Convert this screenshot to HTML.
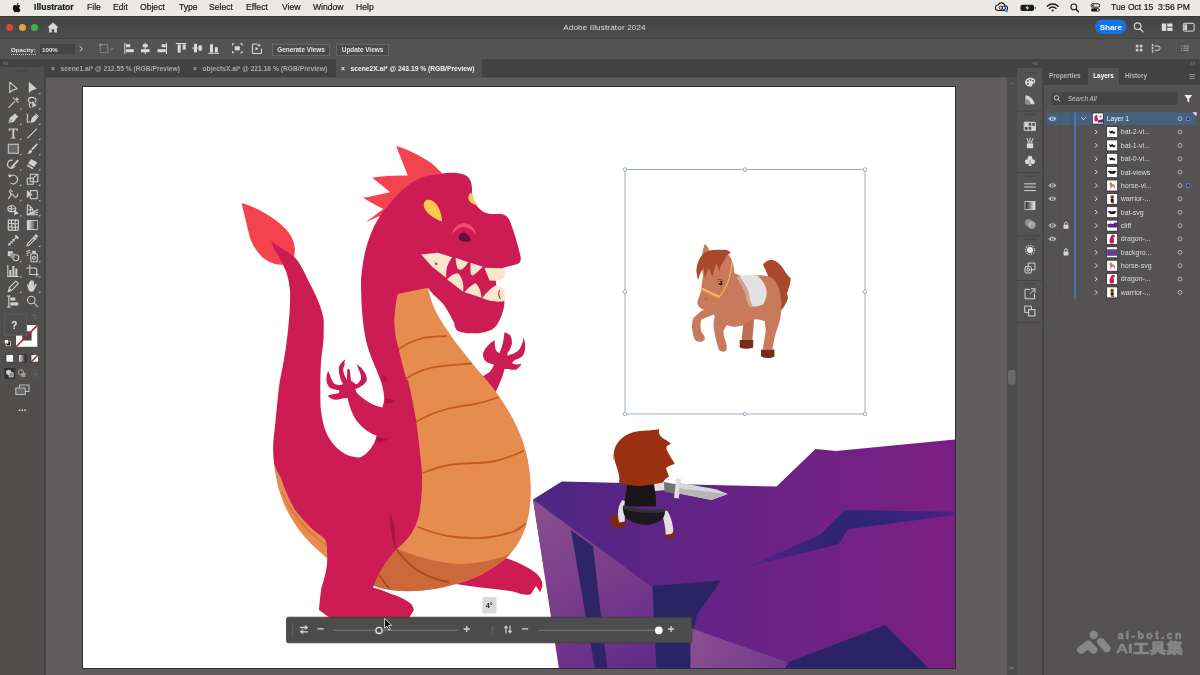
<!DOCTYPE html>
<html lang="en">
<head>
<meta charset="utf-8">
<title>Adobe Illustrator 2024</title>
<style>
*{box-sizing:border-box;margin:0;padding:0}
html,body{width:1200px;height:675px;overflow:hidden;background:#505050}
body{position:relative;font-family:"Liberation Sans","Noto Sans CJK SC",sans-serif;color:#ddd;-webkit-font-smoothing:antialiased}
.abs{position:absolute}
#menubar{will-change:transform;left:0;top:0;width:1200px;height:15.500px;background:#ebe9e6;color:#1a1a1a;font-size:8.6px;line-height:15px;white-space:nowrap}
#menubar span{position:absolute;top:0;-webkit-text-stroke:.2px #1a1a1a}
#titlebar{left:0;top:15.500px;width:1200px;height:22.500px;background:linear-gradient(#434343,#4e4e4e);border-top:1px solid #3a3a3a}
#title{will-change:transform;left:0;width:1209px;top:6.500px;text-align:center;font-size:8.1px;color:#dedede;letter-spacing:.15px}
.dot{position:absolute;top:7.500px;width:7px;height:7px;border-radius:50%}
#ctrl{left:0;top:38px;width:1200px;height:21px;background:#535353;border-top:1px solid #424242}
#ctrl .t{position:absolute;will-change:transform;font-size:6.2px;color:#e4e4e4;top:6.5px;font-weight:bold}
.btn{will-change:transform;position:absolute;top:5px;height:12px;border:1px solid #676767;font-size:6.4px;line-height:10.5px;text-align:center;color:#e6e6e6;font-weight:bold;background:#4a4a4a}
#tabs{left:0;top:59px;width:1200px;height:18px;background:#424242}
#tabs .tab{position:absolute;top:1px;height:17px;font-size:6.7px;line-height:17px;will-change:transform;color:#a9a9a9;white-space:nowrap;font-weight:bold}
#tabs .tab.on{background:#525252;color:#f2f2f2;top:0;line-height:19px;height:18px}
#tools{left:0;top:67px;width:44px;height:608px;background:#504f4d}
#toolsep{left:44px;top:77px;width:2px;height:598px;background:#474646}
#canvas{left:46px;top:77.500px;width:960.500px;height:598px;background:#5f5d5e;overflow:hidden}
#artboard{left:83px;top:87px;width:872px;height:581px;background:#fff;outline:1px solid #2e2e2e}
#vscroll{left:1006.500px;top:77px;width:10.500px;height:598px;background:#4d4c4c}
#dock{left:1017px;top:68px;width:24.500px;height:607px;background:#545253}
#dockgap{left:1041.500px;top:59px;width:2px;height:616px;background:#454444}
#panel{left:1043.500px;top:68px;width:156.500px;height:607px;background:#545253}
#ptabs{left:1043.500px;top:68px;width:156.500px;height:16.500px;background:#434242}
#ptabs span{will-change:transform;position:absolute;top:0;height:16.500px;line-height:16px;font-size:6.4px;font-weight:bold;color:#b4b4b4}
.row{position:absolute;left:1047px;width:150px;height:13px}
.lname{position:absolute;font-size:6.5px;color:#d9d9d9;line-height:13px;white-space:nowrap}
.thumb{position:absolute;width:11px;height:11px;background:#fff;border:0.5px solid #222}
</style>
</head>
<body>
<!-- ===== macOS menu bar ===== -->
<div id="menubar" class="abs">
  <svg class="abs" style="left:12px;top:2px" width="10" height="11" viewBox="0 0 20 22"><path d="M14.5 11.6c0-2.4 2-3.500 2.100-3.600-1.100-1.700-2.900-1.900-3.500-1.900-1.500-.2-2.900.9-3.700.9-.8 0-1.900-.9-3.200-.8-1.600 0-3.100.9-3.900 2.400-1.700 2.900-.4 7.200 1.200 9.600.8 1.200 1.700 2.500 3 2.400 1.200 0 1.700-.8 3.100-.8s1.800.8 3.100.8 2.100-1.200 2.900-2.300c.9-1.300 1.300-2.600 1.300-2.700-.100 0-2.400-.9-2.400-4zM12.200 4.500c.6-.8 1.100-1.900 1-3-.9 0-2.100.6-2.800 1.400-.6.700-1.100 1.800-1 2.900 1.100.1 2.200-.5 2.800-1.300z" fill="#111"/></svg>
  <span style="left:34px;font-weight:bold">Illustrator</span>
  <span style="left:87px">File</span>
  <span style="left:113px">Edit</span>
  <span style="left:140px">Object</span>
  <span style="left:179px">Type</span>
  <span style="left:209px">Select</span>
  <span style="left:246px">Effect</span>
  <span style="left:282px">View</span>
  <span style="left:313px">Window</span>
  <span style="left:356px">Help</span>
  <span style="left:1111px">Tue Oct 15&nbsp; 3:56 PM</span>
</div>
<!-- ===== title bar ===== -->
<div id="titlebar" class="abs">
  <div class="dot" style="left:6px;background:#e0443e"></div>
  <div class="dot" style="left:18.5px;background:#e5a33a"></div>
  <div class="dot" style="left:31px;background:#3db24b"></div>
  <svg class="abs" style="left:47px;top:5px" width="12" height="11" viewBox="0 0 12 11"><path d="M6 0.500 0.400 5.600h1.700v4.900h2.700V7.200h2.400v3.300h2.700V5.600h1.700z" fill="#d8d8d8"/></svg>
  <div id="title" class="abs">Adobe Illustrator 2024</div>
</div>
<!-- ===== control bar ===== -->
<div id="ctrl" class="abs">
  <span class="t" style="left:11px;border-bottom:1px dotted #ccc;line-height:7.5px">Opacity:</span>
  <div class="abs" style="left:40px;top:4.500px;width:35px;height:10.500px;background:#454545"></div>
  <span class="t" style="left:42px">100%</span>
  <svg class="abs" style="left:78px;top:6px" width="6" height="8" viewBox="0 0 6 8"><path d="M1.800,1.200 L4.300,3.800 L1.800,6.400" fill="none" stroke="#e2e2e2" stroke-width="1"/></svg>
  <div class="btn" style="left:272px;width:58px">Generate Views</div>
  <div class="btn" style="left:336px;width:53px">Update Views</div>
</div>
<!-- ===== doc tabs ===== -->
<div id="tabs" class="abs">
  <div class="tab" style="left:51px">×&nbsp;&nbsp;&nbsp;scene1.ai* @ 212.55 % (RGB/Preview)</div>
  <div class="tab" style="left:193px">×&nbsp;&nbsp;&nbsp;objectsX.ai* @ 221.16 % (RGB/Preview)</div>
  <div class="tab on" style="left:336px;width:146px;padding-left:5px">×&nbsp;&nbsp;&nbsp;scene2X.ai* @ 243.19 % (RGB/Preview)</div>
</div>
<!--TOP-START-->
<svg class="abs" style="left:0;top:0" width="1200" height="60" viewBox="0 0 1200 60" font-family="Liberation Sans, sans-serif">
  <!-- menubar status icons -->
  <g fill="none" stroke="#1c1c1c" stroke-width="1.100">
    <path d="M997.500,10.500 a2.800 2.800 0 0 1 .6,-5.500 a3.600 3.600 0 0 1 6.800,.6 a2.500 2.500 0 0 1 .8,4.900 Z"/>
    <circle cx="1000.800" cy="7.800" r="1.700" stroke-width=".9"/><circle cx="1003.800" cy="7.800" r="1.700" stroke-width=".9"/>
  </g>
  <circle cx="1006.500" cy="10.500" r="1.600" fill="#3b8ed6"/>
  <rect x="1020.500" y="4.800" width="13.500" height="6.200" rx="1.800" fill="#1c1c1c"/><rect x="1034.600" y="6.700" width="1.200" height="2.400" rx=".5" fill="#555"/>
  <path d="M1028,5.300 L1025,8.300 H1027.300 L1026.300,10.600 L1029.500,7.500 H1027.200 Z" fill="#f2f2f2"/>
  <g fill="none" stroke="#1c1c1c" stroke-width="1.350" stroke-linecap="round">
    <path d="M1047.300,6.300 a7.600 7.600 0 0 1 10.800,0"/><path d="M1049.300,8.400 a4.800 4.800 0 0 1 6.800,0"/>
  </g>
  <circle cx="1052.700" cy="10.500" r="1.100" fill="#1c1c1c"/>
  <circle cx="1073.800" cy="6.900" r="2.900" fill="none" stroke="#1c1c1c" stroke-width="1.100"/><path d="M1076,9.200 L1078.500,11.700" stroke="#1c1c1c" stroke-width="1.300" stroke-linecap="round"/>
  <rect x="1091" y="3.800" width="8.800" height="3.400" rx="1.700" fill="none" stroke="#1c1c1c" stroke-width="1"/><circle cx="1093" cy="5.500" r=".9" fill="#1c1c1c"/>
  <rect x="1091" y="8.200" width="8.800" height="3.400" rx="1.700" fill="#1c1c1c"/><circle cx="1097.800" cy="9.900" r=".9" fill="#ebe9e6"/>
  <!-- share + window icons -->
  <rect x="1095" y="19.400" width="31.500" height="14.600" rx="7.300" fill="#1574e4"/>
  <text x="1110.800" y="29.600" font-size="8" font-weight="bold" fill="#fff" text-anchor="middle">Share</text>
  <circle cx="1137.600" cy="26.200" r="3.300" fill="none" stroke="#dcdcdc" stroke-width="1.100"/><path d="M1140,28.800 L1143,31.800" stroke="#dcdcdc" stroke-width="1.200" stroke-linecap="round"/>
  <g fill="#dcdcdc"><rect x="1161.800" y="23.500" width="4.400" height="7.400"/><rect x="1167.200" y="23.500" width="5.300" height="3.200"/><rect x="1167.200" y="27.700" width="5.300" height="3.200"/></g>
  <rect x="1183.300" y="23.300" width="10.800" height="7.800" rx="1" fill="none" stroke="#dcdcdc" stroke-width="1"/><rect x="1184.300" y="24.300" width="2.600" height="5.800" fill="#dcdcdc"/>
  <!-- control bar right icons -->
  <g fill="#cfcfcf"><rect x="1135.800" y="44.800" width="2.600" height="2.600"/><rect x="1139.800" y="44.800" width="2.600" height="2.600"/><rect x="1135.800" y="48.800" width="2.600" height="2.600"/><rect x="1139.800" y="48.800" width="2.600" height="2.600"/></g>
  <g fill="none" stroke="#cfcfcf" stroke-width="1"><path d="M1152.500,44 V52.500" stroke-width="1.400" stroke-dasharray="2.200 .9"/><path d="M1154.500,46 H1158 a2 2 0 0 1 0,4.200 H1154.500"/></g>
  <path d="M1181,46 h1 M1183.300,46 H1189 M1181,48.200 h1 M1183.300,48.200 H1189 M1181,50.400 h1 M1183.300,50.400 H1189" stroke="#a8a8a8" stroke-width=".9"/>
  <!-- control bar left icons -->
  <rect x="100.200" y="44.700" width="7.600" height="8" fill="none" stroke="#a9a9a9" stroke-width=".9" stroke-dasharray="1.200 .7"/><path d="M98.800,44.700 h3 M100.200,43.300 v3" stroke="#a9a9a9" stroke-width=".7"/>
  <path d="M110,48.300 l1.600,1.600 l1.600,-1.600" fill="none" stroke="#a9a9a9" stroke-width=".8"/>
  <g fill="#dadada" stroke="none">
    <rect x="124.300" y="42.700" width="1" height="11.300"/><rect x="126" y="44.200" width="4.200" height="3"/><rect x="126" y="49.200" width="7.800" height="3"/>
    <rect x="144.700" y="42.700" width="1" height="11.300"/><rect x="142.800" y="44.200" width="4.900" height="3"/><rect x="141" y="49.200" width="8.500" height="3"/>
    <rect x="166" y="42.700" width="1" height="11.300"/><rect x="161.700" y="44.200" width="4" height="3"/><rect x="157.500" y="49.200" width="8.200" height="3"/>
    <rect x="175.800" y="43" width="10.500" height="1"/><rect x="177.700" y="44.400" width="3" height="8.200"/><rect x="182.700" y="44.400" width="3" height="5.200"/>
    <rect x="192" y="47.600" width="10.500" height="1"/><rect x="194" y="43.800" width="3" height="8.500"/><rect x="198.700" y="45.300" width="3" height="5.500"/>
    <rect x="208.200" y="52.800" width="10.800" height="1"/><rect x="210" y="44.200" width="3" height="8.300"/><rect x="214.800" y="47.200" width="3" height="5.300"/>
    <rect x="234.800" y="46.300" width="5" height="4"/>
  </g>
  <path d="M232.500,45.500 v-1.800 h1.800 M240.300,43.700 h1.800 v1.800 M242.100,51 v1.800 h-1.800 M234.300,52.800 h-1.800 v-1.800" fill="none" stroke="#dadada" stroke-width="1"/>
  <path d="M257.500,44 H253.500 a1 1 0 0 0 -1,1 V52.500 a1 1 0 0 0 1,1 H260.500 a1 1 0 0 0 1,-1 V48.500" fill="none" stroke="#dadada" stroke-width="1.100"/>
  <path d="M259,43.200 l.6,1.500 l1.600,.5 l-1.600,.5 l-.6,1.500 l-.6,-1.500 l-1.500,-.5 l1.500,-.5 Z M255.500,47 l3,1.800 l-3,1.800 Z" fill="#dadada"/>
</svg>
<!--TOP-END-->
<!-- ===== canvas ===== -->
<div id="canvas" class="abs"></div>
<div id="artboard" class="abs"></div>
<!--ART-START-->
<svg class="abs" style="left:0;top:0" width="1200" height="675" viewBox="0 0 1200 675">
<defs>
  <clipPath id="ab"><rect x="83" y="87" width="872" height="581"/></clipPath>
  <linearGradient id="cl1" x1="534" y1="0" x2="955" y2="0" gradientUnits="userSpaceOnUse">
    <stop offset="0" stop-color="#4e2685"/><stop offset=".5" stop-color="#682385"/><stop offset="1" stop-color="#7d1f84"/>
  </linearGradient>
  <linearGradient id="cl2" x1="540" y1="500" x2="640" y2="668" gradientUnits="userSpaceOnUse">
    <stop offset="0" stop-color="#87508f"/><stop offset=".5" stop-color="#7a3d8c"/><stop offset="1" stop-color="#632a8a"/>
  </linearGradient>
  <linearGradient id="cl3" x1="690" y1="628" x2="790" y2="668" gradientUnits="userSpaceOnUse">
    <stop offset="0" stop-color="#8a4f92"/><stop offset="1" stop-color="#74398c"/>
  </linearGradient>
  <linearGradient id="cl4" x1="748" y1="0" x2="956" y2="0" gradientUnits="userSpaceOnUse">
    <stop offset="0" stop-color="#4f2587"/><stop offset=".4" stop-color="#2f2472"/><stop offset=".7" stop-color="#33247a"/><stop offset="1" stop-color="#4a2382"/>
  </linearGradient>
</defs>
<g clip-path="url(#ab)">
<!-- ============ CLIFF ============ -->
<g id="cliff">
  <path d="M533,499.500 L561.800,481.500 L776.500,486.500 L815.500,449 L836,451 L956,439.500 L956,669 L560,669 Z" fill="url(#cl1)"/>
  <path d="M533,499.500 L652.500,587.500 L656.500,669 L559,669 Z" fill="url(#cl2)"/>
  <path d="M571,530 L593,546 L601.500,620 L607.500,669 L595,669 L585,612 Z" fill="#2d2568"/>
  <path d="M652.500,586 L721,580.500 L697,615 L690.500,643 L690.500,669 L656.500,669 Z" fill="#2a2466"/>
  <path d="M690.500,628 L788,662.500 L785,669 L690.500,669 Z" fill="url(#cl3)"/>
  <path d="M788,662.500 L885,625 L929.500,669 L785,669 Z" fill="#2a2466"/>
  <path d="M748,566.700 L820,534.700 L845.300,510 L956,511.800 L956,514.800 L848,529.300 L838.700,544 Z" fill="url(#cl4)"/>
</g>
<!-- ============ DRAGON ============ -->
<g id="dragon">
  <!-- tail flame -->
  <path d="M241.600,203 C256,207 278,219 289,233 C296,243 296,253 293,259 C288,267 276,266 266,260 C256,253 250,241 248,230 C246,220 243,210 241.600,203 Z" fill="#f4434f"/>
  <!-- crest spikes -->
  <path d="M396.200,146 C406,148.500 420,155.500 432,163.500 L444,175 L400,215 L377.800,216.700 L365.600,222.200 C369,219.500 376,214.500 383.300,208.900 C378,206.500 369,201.500 363.300,197.800 C371,196.500 381,194 390,192.200 C384.500,187.500 377,181.500 372.200,177.800 C383,176 396,175.300 407.800,175.600 C405,168 399.500,155 396.200,146 Z" fill="#f4434f"/>
  <!-- right foot (behind belly) -->
  <path d="M500,556 C512,560 528,566 537,574 C543,580 544,586 540,592 L536,586 L531,594 C527,596 520,594 515,592 C500,589 480,588 456,584 Z" fill="#cc1c53"/>
  <!-- right arm + hand -->
  <path fill="#cc1c53" d="M480,378 C485,375 487.500,373.500 489.600,371.900 C491.500,369.700 493,367.200 494,364.400
    C491,364 488,363 485.900,361.500 C484,359.700 483,357.300 483,354.800 C483.300,352.300 484.300,350 485.900,348.100 C488.300,344.800 491.300,342 494.800,340 C494.600,343.300 494.800,346.500 495.600,349.600 C496.500,351.200 497.800,352.500 499.300,353.300
    C500.800,349.800 502.200,346 503,342.200 C503.700,339 504.200,335.800 504.400,332.600 C506.800,333 509,334 510.400,335.600 C511.600,338.200 512.100,341 511.900,343.700 C511,347.300 509.500,350.600 507.400,353.300
    L507.400,355.600 C511,354.800 514.600,353.300 517.800,351.100 C519.500,349.400 520.700,347.400 521.500,345.200 C522.600,342.800 523.300,340.300 523.700,337.800 C524.800,341.200 525.300,344.700 525.200,348.100 C524.900,350.800 524.200,353.300 523,355.600 C520.800,357.800 518,359.300 514.800,360
    C513.800,361 512.800,362 511.900,363 C513.400,363.700 514.800,364.200 516.300,364.400 C518,364.400 519.800,364.200 521.500,363.700 C520.200,366.200 518.500,368.200 516.300,369.600 C513.800,370 511.300,369.800 508.900,368.900 C507.400,369 505.900,369 504.400,368.900
    C503.500,373.500 502,378 500,382.200 C498.700,385.500 497.200,388.700 495.600,391.900 L490,394 Z"/>
  <!-- belly -->
  <path d="M388,290 L427.800,284 L427.800,287.800 C430,297 433,306 436,312 C446,331 464,354 484,377 C500,395 516,420 524,445 C531,467 533,495 528,518 C524,537 515,550 505,559 C490,571 475,579 456,584 C436,590 410,593 391,590 C360,586 325,560 303,535 C287,516 276,490 274,462 L300,470 L395,470 L388,380 Z" fill="#e68c4f"/>
  <!-- belly shade -->
  <path d="M340,552 C360,551 380,549 398,549 C410,555 440,563.500 459,564 C480,563.500 498,559 510.500,553.800 C500,565 478,578 456,584 C436,590 410,593 391,590 C372,587.500 352,577 336,564 Z" fill="#cb693b"/>
  <path d="M282,492 C288,506 296,518 308,530 C314,536 320,541 327,546" fill="none" stroke="#d2733f" stroke-width="1.100"/>
  <!-- belly lines -->
  <g fill="none" stroke="#c65a1c" stroke-width="1.800" stroke-linecap="round">
    <path d="M398,349.600 C406,344 415,340 423,338 C431,336.500 439,336.500 446,336"/>
    <path d="M405.500,379 C414,373 423,369.500 433,367.400 C446,365 458,364.500 471,363.500"/>
    <path d="M416,422 C426,416 436,412 447,409 C457,406.500 466,405.500 475,404 C483,402.500 490,400.500 498,397.500"/>
    <path d="M423,473 C432,469 442,466 452,464.500 C465,463 478,463.500 490,462 C502,460 513,456 523,451"/>
    <path d="M418,527 C428,531 438,534.500 448,536 C459,538 470,538.500 481,538 C494,537 506,534.500 515,531 C519,529 522,527 525,524"/>
    <path d="M396,549 C402,557 409,564 416,569.500 C426,576 437,580 448,582" stroke="#a9481f"/>
    <path d="M380,576 C383,581 386,585 389,588" stroke="#a9481f"/>
  </g>
  <!-- tail + body + neck + head (crimson) -->
  <path fill="#cc1c53" d="
    M271,241 C276,245 288,252 294.500,257 C300,263 304,271 308,280 C316,295 322,308 323.700,320
    C323.800,327 323.600,334 323.500,340 C322.500,350 320.800,360 320.600,368.900 C320.200,382 320.200,395 320.600,407.400 C321.500,416 323,424 325.400,430.600
    C328,437.500 332,443.500 337,447.900 C341.500,452 347,455.500 352.400,456.600 C354.800,457.200 357,457.500 359.100,457.500 C361.500,456.800 364,455.500 365.900,453.700
    C369,451 371.800,447.500 373.600,444 C375,441.300 376,438.300 376.500,435.400 C374,434.800 371.700,433.800 369.700,432.500 C366,430.500 362.800,428 360.100,424.800
    C357,421.500 354.300,417.500 352.400,413.200 C350.200,408.300 348.600,403 347.600,397.800
    C345.800,398.400 343.800,398.600 341.800,398.500 C339.500,399.300 337.200,399.800 335,399.700 C332.300,399.200 329.800,397.800 327.700,395.900 C328.800,395.400 329.900,394.900 331,394.500
    C333.500,394.400 336.300,393.800 338.900,393 C339.200,392 339.200,391 338.900,390
    C335.500,390 332,389 329.300,387.200 C327.300,384.800 326.200,381.700 326.400,378.500 C326.500,375.700 327.200,373 328.300,370.800 C329,373.500 330,376.200 331.200,378.500
    C332,380.500 332.900,382.200 334,383.500 C336.200,384.600 338.600,385.100 341,385 C341.700,384.700 342.400,384.400 343,384
    C341.500,381.800 340.400,379.300 339.900,376.600 C339,373.500 338.600,370.200 338.900,367 C340.300,363.700 342.700,361 345.600,359.300 C344.400,361.800 343.500,364.400 343.300,367
    C343.100,369 343.300,371 343.700,372.800 C344.500,375.500 345.600,378 347,380 L347.200,369.500 C347.600,368.700 349.400,368.700 349.800,369.500 L351,381
    C352.700,381.600 354.500,383.200 356.200,384.300 C358.300,383.200 360,381.600 361,379.500 C361.300,377.200 360.900,374.900 360.100,372.800 C359.200,369.700 357.800,366.700 356.200,364.100
    C359.700,366.300 362.800,369.300 364.900,372.800 C366.300,375.200 367,377.900 366.800,380.500 C365.600,383 363.600,385 361,386.200 C359.200,387.400 357.300,388.400 355.300,389.100
    C355.600,390.100 355.900,391.100 356.200,392 C359.500,395.700 363.400,399 367.800,401.700 C372.300,404.500 377.200,406.500 382.300,407.400 C383.500,404.400 384.200,401.100 384.200,397.800
    C383.800,392.500 382.800,387.300 381.300,382.400 C379,375.800 376.200,369.400 373.600,363.100 C370.500,355.600 367.800,347.900 365.900,340 C364.500,333.400 363.500,326.700 362.800,320
    C361.500,306 361,293 361,280 C362,268 363.500,258 365.600,250 C368,241 371,233 374.400,225.600
    C379,217 384,210 390,203.300 C396,196 402,190 407.800,185.600 C415,180 422,177 430,175.600
    L441,174 C447,172.500 458,172 465,175 C471,178 472.500,184 472,194 C473,201 476,206 481,210
    C487,215 494,214 500,214 C505,214 509,217 511,224 C514,232 518,245 520.500,256
    C521.500,261 520,263.500 516,264.500 L504,267.500 L495,274 L496.500,287 L504.400,301.100 L504.400,303.300
    C504,309 502.500,314 500,318.900 C498,324 495,328 491,330 C485,332.500 479,333.500 473.300,333.300
    C468,333.500 462,333 457.800,331 C455,329 454.500,326 454.400,323.300 C451,317 448,311 444.400,305.600
    C441,301 437,298 433.300,294.400 L427.800,287.800
    L397.800,294 C396,300 395,310 394.400,319 C394,330 396,340 399,350 C401,360 404,370 406.700,380
    L408,380 C411,394 414,407 416,420 C418,434 419.500,447 420,453.300 C421.500,465 422.500,476 422,486.700
    C421.500,497 420.500,507 419,515.600 C417,523 414,530 410,535.600 C406,541 401,546 396.700,549
    C390,556 380,568 373,587.500 C379,589 385,591 391,594 C397,595.500 402,598 407,601
    C411,603 413.500,606 413.800,610 L409,618 L330,618 L319,610 C319.500,602 320.500,594 321.500,587.500
    C324,580 326,572 327,565 C327.500,556 327,550 326.700,544.400 C326,540 325,539 323.300,537.800
    C319,534 314,531 310,526.700 C304,521 299,515 294.400,509 C289,499 284,488 281,477.800
    C278,473 276,469 274.400,464.400 C273,457 273,449 273.300,442 C274,434 275,427 275.600,420
    C277,406 278,393 280,380 C283,366 286,350 288,330 C289.500,316 290.500,303 290,290
    C289,281 287,272 284.400,268 C281,260 278,254 274.400,250 Z"/>
  <!-- left hand thickening -->
  <g fill="none" stroke="#cc1c53" stroke-width="2.600" stroke-linecap="round">
    <path d="M328.800,375 Q327,385.500 339,388.800"/><path d="M343.500,364 Q338.500,373 345.500,382.500"/><path d="M359.500,368.500 Q367.500,379 356,387"/><path d="M331,396.300 Q337,398.300 345,395"/>
  </g>
  <ellipse cx="348.500" cy="389.500" rx="7.500" ry="5.500" fill="#cc1c53" transform="rotate(35 348.500 389.500)"/>
  <!-- creases -->
  <path d="M390,514 C393,518 394.500,526 395,534 C395.500,540 395.800,545 395.600,549 C392,540 390,528 390,514 Z" fill="#a8123f"/>
  <path d="M382,374.700 C385,375.500 387,378 387,381.400 L383.200,380.500 Z M386,397.800 C389,399.500 392,400.500 394.800,400 C392,402.500 388.500,403.800 385.500,403.500 Z M376.500,437.300 C381,438.500 386,438.300 390,437.500 C386,441 381,442.500 377,442 Z" fill="#a8123f"/>
  <!-- face -->
  <path d="M442.200,221.600 C436,219.500 428.500,215 425.400,210 C422.500,205.500 423.500,201 427.500,199.800 C432,198.800 436.500,203 438.800,208 C440.800,212.500 442,217.500 442.200,221.600 Z" fill="#ffc94d"/>
  <path d="M471,192.500 C468.500,194 467.500,198 469.500,201 C471,203.200 474,204.500 476.500,204.800 C474.500,201.500 472.800,197.500 472,194 Z" fill="#ffc94d"/>
  <path d="M452.300,234.100 C453.500,227.500 458,223.200 463.900,223 C470,223 475,228 476.400,235 C473.500,231 469,227.800 463.900,227.300 C460,227.300 457,229 455.200,231.200 C454,232 453,233 452.300,234.100 Z" fill="#f0467b"/>
  <path d="M458.600,237.500 C459,234.500 461.200,232.600 463.900,232.600 C467,233.200 469.500,236.500 471.100,240.300 C469,241.500 466.500,242 463.900,241.800 C461,241.500 458.800,240 458.600,237.500 Z" fill="#6a0e38"/>
  <!-- teeth -->
  <g fill="#fae6cd">
    <path d="M421.100,254.400 L437.800,252.800 L452.200,257.200 C450,260.500 448,264 446.700,267.800 C446.300,271 446.100,274.500 446.100,277.800 L432.200,266.700 Z"/>
    <path d="M455.600,257.800 L468.300,262.200 C466.500,265 464,268 462,269.300 C460,270 458.300,269.600 457.500,268.500 C456.300,265 455.700,261.500 455.600,257.800 Z"/>
    <path d="M470.600,262.800 L482.800,266.700 C479.500,270 476,273.500 472.800,275.600 C471.500,275.500 470.800,274.500 470.700,273.300 C470.400,270 470.400,266.500 470.600,262.800 Z"/>
    <path d="M484.400,267.800 L505,268.200 L505,277 C503,279 500,280.500 497,280.800 L489.500,280.500 C488,276.500 486,272 484.400,267.800 Z"/>
    <path d="M447.200,279.400 C450,276 454,273.500 457.800,273.300 C461,276 463,281 463.300,286 L463.300,291.700 Z"/>
    <path d="M464.400,292.200 C467.500,288.500 471.500,285 475.600,283.300 C478.500,286 480.300,290 481,294 L481.700,297.800 Z"/>
    <path d="M482.200,298.300 C486,293 491,288 495.600,285.600 C499,286 502,287.500 504.500,289.500 L504.800,301.100 C497,302.500 489,301 482.200,298.300 Z"/>
  </g>
  <path d="M435,262 L438,264 L435.500,265.500 Z" fill="#cc1c53"/>
  <path d="M499.500,290 C498.300,293 498.500,296.500 500.500,299" fill="none" stroke="#7a1030" stroke-width=".9"/>
</g>
<!-- ============ WARRIOR ============ -->
<g id="warrior">
  <ellipse cx="617.500" cy="521.500" rx="8.500" ry="6.300" fill="#7b2812" transform="rotate(18 617.500 521.500)"/>
  <ellipse cx="669.800" cy="534.300" rx="5.300" ry="4" fill="#7b2812" transform="rotate(15 669.800 534.300)"/>
  <path d="M622.500,500 C619.500,503 617.800,509 618,515 C618.200,518.500 618.800,521 619.500,522.500 L624.800,521.500 C624.500,516 625.500,509 628.500,503 Z" fill="#e2dede"/>
  <path d="M661,510 L667.500,511 C670.500,516 672.800,523 673.300,530 C673.300,532 672.500,533.500 671,534 L665.800,534.800 C665.500,527 663.500,518 661,510 Z" fill="#e2dede"/>
  <path d="M627.200,484.500 L654,484.500 C655.500,492 656.200,499 656,506.600 L624.300,506.600 C625,499 626,491 627.200,484.500 Z" fill="#19151a"/>
  <path d="M623,506 C636,510 650,510.500 664.800,509.500 C665.500,512.500 664.500,516 662.800,518.500 C658,522.500 652,525 645.500,525 C638,524.500 631,522 626,518 C623.500,514.500 622.500,510 623,506 Z" fill="#1c181d"/>
  <path d="M623.200,505.500 C636,510 650,510.800 664.500,509 L664.900,512 C650,514 636,513.200 623.200,509 Z" fill="#343036"/>
  <path d="M654,483 L666,482.500 L666,490 L655,491 Z" fill="#e2dede"/>
  <path d="M664,482 L676,484.300 L675.500,494 L664.500,491.800 Z" fill="#737376"/>
  <path d="M676.300,478.300 L681,479 L678.800,498.500 L674,497.800 Z" fill="#dedede"/>
  <path d="M679.800,482.800 L716,489.300 L727.800,494 L711.500,500 L679,493.500 Z" fill="#d6d6d6"/>
  <path d="M679.300,488.300 L727.800,494 L711.500,500 L679,493.500 Z" fill="#b7b7b9"/>
  <path d="M614,456 C613,445 622,435 634,432 C642,430 650,431 659.400,428.900 C657.500,433 660,436.500 665,439.500 C668,441.300 670,442.700 671,444 C667,445 665.500,447 667,450.500 C669.500,455.500 672.800,460 674.800,464 C671,465 668,466.200 666,468.200 C667,471 668,474 669,476.700 C666,478 664,480 663.200,482.400 C658,483.800 652,484 646,485.200 C637,487 628,485.500 619,482.400 C621,474 615,466 614,456 Z" fill="#9b3011"/>
  <path d="M613.500,452 C612.300,455 612.500,459 614.200,462 Z" fill="#e7a27f"/>
</g>
<!-- ============ HORSE ============ -->
<g id="horse">
  <!-- tail -->
  <path d="M763,265 C765,261 769,259.500 772.500,260 C777,261 781,265 784,269.700 C786,273 788,276 790.800,278.400 C790.500,283 789,288 787,293 C787.500,295 787.800,297 788,298.600 C786,304 783,308.500 780,312 C777,304 774,296 772,288 C770,280 767,272 763,265 Z" fill="#a8492b"/>
  <!-- back legs -->
  <path d="M743.600,322 L754,319 C753.800,326 753,333 752.300,340 L741.700,340 C742,334 742.800,328 743.600,322 Z" fill="#bd6d51"/>
  <path d="M739.700,340 L753.200,340 L753.200,347.500 C749,349.300 744,349.300 739.700,347.500 Z" fill="#7a2a18"/>
  <path d="M764,306 C770,301 779,304 781,312 C781,318 778,327 775.500,334 C774.300,339 773.200,344 772.500,349.500 L762.900,349.500 C763.500,343 765,337 765.700,331 C765.500,323 763.500,314 764,306 Z" fill="#c9795c"/>
  <path d="M761,349.500 L774.400,349.500 L774.400,356.500 C770,358.600 765,358.400 761,356.500 Z" fill="#7a2a18"/>
  <!-- body -->
  <path d="M726,266 C731,271 736,275.500 744,276 C753,275 763,274.500 770.600,277 C777,281 780,289 781,298 C782,306 781,313 778,318 C773,322 766,322.500 761,320 C755,318 749,320 743.600,325 C736,328 728,327 722,322 C716,318 711,313 709,307 C708,296 714,276 726,266 Z" fill="#c9795c"/>
  <!-- front legs -->
  <path d="M709,306 C704,309 698,313 693.500,318 C691.500,322 691.800,327 692.500,331.300 C693,335 694,339 696,341 C699,342.500 703,342 705,339 C705,336 702.500,334 701.200,331.300 C700.300,327 700.300,323 701.200,319.800 C705,317.500 711,316 716,313 Z" fill="#c9795c"/>
  <path d="M716,313 C714,318 713,323 713.700,327.500 C714.500,334 716.500,342 718.500,349 C720,352 724.500,352.500 726.200,350.600 C727,348 726.800,345.500 726.200,343 C724.800,339 723.400,335 723.400,331.300 C725,327 728,323.500 731,320 Z" fill="#c9795c"/>
  <!-- head -->
  <path d="M705,243.700 C707.500,246 709.500,250 710.500,254 C714,251 718,249.800 722,250.400 C728,252 732,258 733.500,266 C735,273 734,279 732,283 C731,288 729.500,291.500 727,294.700 C724.500,298 721.500,300.500 718.500,302.400 C715.500,305.500 712,308 709,309 C705.500,310 701.500,309.500 699.300,307 C697.500,305 697.200,302.500 697.700,300.500 C699,297 700.300,294 701,291 C701.500,286 702.200,281 703,275.500 C702,268 701.500,262 702,256 C702.500,251 703.500,247 705,243.700 Z" fill="#c9795c"/>
  <path d="M719,253 C720.500,252 722.500,252.500 723,254.500 C722.500,256.500 721,258.500 720,260 Z" fill="#dd9a86"/>
  <!-- saddle -->
  <path d="M736.800,277.400 C743,275 750,274.500 757,275.500 C762,279 765.500,285 766.700,291 C767,296 765.500,301 763,304.400 C758,306.500 753,307 749.400,306.300 C747,302 746,297 745.500,292.800 C743,287 740,282 736.800,277.400 Z" fill="#e3e1e1"/>
  <path d="M736.800,277.400 C740,282 743,287 745.500,292.800 C746,297 747,302 749.400,306.300 C750.500,306.600 751.700,306.700 753,306.700 C750.500,302 749.300,297 748.800,292.500 C746.500,286.500 743.500,281.500 739.500,276.600 Z" fill="#cfa58f"/>
  <!-- bridle -->
  <path d="M732,262 C731.500,271 729.500,280 725,288.500 C723,292 721,295 718.500,297.600" fill="none" stroke="#f1b155" stroke-width="1.300"/>
  <path d="M701.500,289 L719,297.300" fill="none" stroke="#ef9f47" stroke-width="2.800"/>
  <path d="M701.800,288.300 L719.200,296.500" fill="none" stroke="#fbd58a" stroke-width=".9"/>
  <!-- mane -->
  <path d="M696.400,270 C697,262 700,256 705,252.500 C710,249.500 716,249.500 721,250 C725,249 729,250 731,253 C728,254 726,256 725,259 C722.500,262 720.500,266 719.500,271 C718.500,268 717.500,265.500 716.500,263.500 C714.500,267.500 713.200,272.500 712.300,278 C711.300,274 710.200,270.500 709,268 C707.200,271 706,274.500 705,278 C704.200,274.500 704,271 704,268 C701,271 699,275.500 698,280 C697,276.500 696.500,273 696.400,270 Z" fill="#a8492b"/>
  <path d="M717,280 C719,278.800 722,279.200 723.500,281" fill="none" stroke="#8a3a22" stroke-width=".8"/>
  <ellipse cx="720.500" cy="283" rx="2" ry="2.300" fill="#4e170c"/><circle cx="719.800" cy="282.200" r=".7" fill="#fff"/>
  <path d="M705,299 C705.800,298.400 706.600,298.400 707.200,299" fill="none" stroke="#8a4a38" stroke-width=".7"/>
</g>
<!-- selection box -->
<g fill="#fff" stroke="#93a6b4" stroke-width=".9">
  <rect x="625" y="169.500" width="240" height="244.500" fill="none"/>
  <circle cx="625" cy="169.500" r="1.800"/><circle cx="745" cy="169.500" r="1.800"/><circle cx="865" cy="169.500" r="1.800"/>
  <circle cx="625" cy="291.700" r="1.800"/><circle cx="865" cy="291.700" r="1.800"/>
  <circle cx="625" cy="414" r="1.800"/><circle cx="745" cy="414" r="1.800"/><circle cx="865" cy="414" r="1.800"/>
</g>
</g>
</svg>
<!--ART-END-->
<!--OVER-START-->
<svg class="abs" style="left:0;top:0" width="1200" height="675" viewBox="0 0 1200 675">
  <!-- tooltip -->
  <rect x="482.300" y="597" width="14.200" height="16.500" rx="2" fill="#dadada"/>
  <text x="489.300" y="608" font-family="Liberation Sans, sans-serif" font-size="7.200" font-weight="bold" fill="#262626" text-anchor="middle">4°</text>
  <!-- slider bar -->
  <rect x="286.500" y="617.200" width="405.300" height="25.600" rx="2" fill="#4c4c4c" stroke="#3b3b3b" stroke-width=".8"/>
  <line x1="292.500" y1="622" x2="292.500" y2="638" stroke="#5c5c5c" stroke-width="1"/>
  <!-- swap icon -->
  <g stroke="#d2d2d2" stroke-width="1.300" fill="#d2d2d2" stroke-linecap="round">
    <path d="M300.500,627.500 H306" fill="none"/><path d="M305.500,625.500 L308,627.500 L305.500,629.500 Z" stroke-width=".6"/>
    <path d="M302,631.800 H307.500" fill="none"/><path d="M302.500,629.800 L300,631.800 L302.500,633.800 Z" stroke-width=".6"/>
  </g>
  <rect x="317.500" y="628.200" width="6.200" height="1.300" fill="#d2d2d2"/>
  <line x1="333" y1="630.200" x2="458" y2="630.200" stroke="#7b7b7b" stroke-width="1.100"/>
  <circle cx="379" cy="630.400" r="3.100" fill="#4c4c4c" stroke="#dcdcdc" stroke-width="1.300"/>
  <path d="M463.600,629 H469.800 M466.700,625.900 V632.100" stroke="#d2d2d2" stroke-width="1.300" fill="none"/>
  <!-- dim flag -->
  <path d="M492,625.500 V635 M492,626.500 L495,628.500 L492,630.500" stroke="#626262" stroke-width="1" fill="none"/>
  <!-- up/down arrows -->
  <g stroke="#d2d2d2" stroke-width="1.200" fill="#d2d2d2">
    <path d="M506,627.500 V633.500" fill="none"/><path d="M504.300,628 L506,625.600 L507.700,628 Z" stroke-width=".5"/>
    <path d="M510,625.600 V631.500" fill="none"/><path d="M508.300,631 L510,633.500 L511.700,631 Z" stroke-width=".5"/>
  </g>
  <rect x="522" y="628.200" width="6.200" height="1.300" fill="#d2d2d2"/>
  <line x1="538.500" y1="630.200" x2="659" y2="630.200" stroke="#7b7b7b" stroke-width="1.100"/>
  <circle cx="658.800" cy="630.300" r="3.900" fill="#fdfdfd"/>
  <path d="M668,629 H674.200 M671.100,625.900 V632.100" stroke="#d2d2d2" stroke-width="1.300" fill="none"/>
  <!-- mouse cursor -->
  <path d="M384.600,618.300 L384.600,628.200 L386.900,626.200 L388.700,630.200 L390.400,629.400 L388.600,625.600 L391.600,625.400 Z" fill="#111" stroke="#f4f4f4" stroke-width=".8" stroke-linejoin="round"/>
</svg>
<!--OVER-END-->
<!-- ===== left tools ===== -->
<div id="tools" class="abs"></div>
<div id="toolsep" class="abs"></div>
<!--TOOLS-START-->
<svg class="abs" style="left:0;top:0" width="60" height="675" viewBox="0 0 60 675">
<defs><linearGradient id="tg" x1="0" x2="1" y1="0" y2="0"><stop offset="0" stop-color="#f0f0f0"/><stop offset="1" stop-color="#1c1c1c"/></linearGradient></defs>
<path d="M5.500,61.800 L4,63.300 L5.500,64.800 M8,61.800 L6.500,63.300 L8,64.800" fill="none" stroke="#9a9a9a" stroke-width=".7"/>
<path d="M16,70.700 H29" stroke="#3e3e3e" stroke-width="1.500" stroke-dasharray="1 .8"/>
<g transform="translate(13.3 87.6)" ><path d="M-3.500,-5.500 L-3.500,5 L-0.800,2.500 L4,1.200 Z" fill="none" stroke="#cfcfcf" stroke-width="1.100" stroke-linejoin="round" stroke-linecap="round"/></g>
<g transform="translate(32.3 87.6)" ><path d="M-3.500,-5.800 L-3.500,5.500 L-0.500,2.800 L4.500,1.200 Z" fill="#cfcfcf" stroke="none"/></g>
<path d="M38.5,94.2 l1.800,0 l0,-1.800 Z" fill="#cfcfcf"/>
<g transform="translate(13.3 102.9)" ><path d="M-4.500,4.500 L1.500,-1.500" fill="none" stroke="#cfcfcf" stroke-width="1.100" stroke-linejoin="round" stroke-linecap="round" stroke-width="1.600"/><path d="M3.500,-5 V-2 M2,-3.500 H5 M0,-5 L.8,-4.200 M5,-.5 L4.200,-1.200" fill="none" stroke="#cfcfcf" stroke-width="1.100" stroke-linejoin="round" stroke-linecap="round" stroke-width=".8"/></g>
<g transform="translate(32.3 102.9)" ><path d="M-1,0 C-5,-1 -5,-5 -1,-5.500 C3,-6 5,-3 3,-1 M-2,0 C-4,2 -3,4 -1.500,4.500" fill="none" stroke="#cfcfcf" stroke-width="1.100" stroke-linejoin="round" stroke-linecap="round" stroke-width=".9"/><path d="M0,-2.500 L0,5 L1.800,3.300 L4.500,3 Z" fill="#cfcfcf" stroke="none"/></g>
<path d="M19.5,109.5 l1.800,0 l0,-1.800 Z" fill="#cfcfcf"/>
<path d="M38.5,109.5 l1.800,0 l0,-1.800 Z" fill="#cfcfcf"/>
<g transform="translate(13.3 118.2)" ><path d="M-5,5 L-3.500,-0.500 L1,-4 L4,-1 L0.500,3.500 Z" fill="#cfcfcf" stroke="none"/><path d="M1.500,-5 L5,-1.500 L4,-0.500 L0.500,-4 Z" fill="#cfcfcf" stroke="none"/><path d="M-5,5 L-1.500,1.500" stroke="#515151" stroke-width=".8"/></g>
<g transform="translate(32.3 118.2)" ><path d="M-2,5 L-0.500,-0.500 L3,-3.500 L5.500,-1 L2.500,3.500 Z" fill="#cfcfcf" stroke="none"/><path d="M3.500,-5 L6.500,-2 L5.800,-1.200 L2.800,-4.200 Z" fill="#cfcfcf" stroke="none"/><path d="M-5.500,-4 C-3,-3 -6,1 -5,3.500 C-4.500,4.500 -3.500,4 -3,3" fill="none" stroke="#cfcfcf" stroke-width="1.100" stroke-linejoin="round" stroke-linecap="round" stroke-width=".9"/></g>
<path d="M19.5,124.8 l1.800,0 l0,-1.800 Z" fill="#cfcfcf"/>
<path d="M38.5,124.8 l1.800,0 l0,-1.800 Z" fill="#cfcfcf"/>
<g transform="translate(13.3 133.4)" ><path d="M-4.500,-5 H4.500 V-2.500 H3.500 L3,-3.800 H0.900 V4 L2.200,4.300 V5 H-2.200 V4.300 L-0.900,4 V-3.800 H-3 L-3.500,-2.500 H-4.500 Z" fill="#cfcfcf" stroke="none"/></g>
<g transform="translate(32.3 133.4)" ><path d="M-4.500,4.500 L4.500,-4.500" fill="none" stroke="#cfcfcf" stroke-width="1.100" stroke-linejoin="round" stroke-linecap="round"/></g>
<path d="M19.5,140.0 l1.800,0 l0,-1.800 Z" fill="#cfcfcf"/>
<path d="M38.5,140.0 l1.800,0 l0,-1.800 Z" fill="#cfcfcf"/>
<g transform="translate(13.3 148.7)" ><rect x="-5" y="-4.500" width="10" height="9" fill="#6a6a6a" stroke="#cfcfcf" stroke-width="1"/></g>
<g transform="translate(32.3 148.7)" ><path d="M4.500,-5.500 L5.500,-4.500 L0.500,1.500 L-1,0 Z" fill="#cfcfcf" stroke="none"/><path d="M-1.500,.8 L0,2.300 C-.5,4.500 -3,5.500 -5,5 C-3.500,4 -3.500,1.500 -1.500,.8 Z" fill="#cfcfcf" stroke="none"/></g>
<path d="M19.5,155.3 l1.800,0 l0,-1.800 Z" fill="#cfcfcf"/>
<path d="M38.5,155.3 l1.800,0 l0,-1.800 Z" fill="#cfcfcf"/>
<g transform="translate(13.3 164.0)" ><path d="M-1,-3.800 A4 4 0 1 0 1.500,2.500" fill="none" stroke="#cfcfcf" stroke-width="1.100" stroke-linejoin="round" stroke-linecap="round"/><path d="M-3,5 L-2.300,2.800 L4.300,-4.500 L5.600,-3.300 L-.9,4.100 Z" fill="#cfcfcf" stroke="none"/></g>
<g transform="translate(32.3 164.0)" ><path d="M-1,-5 L5,-1.500 L1.800,3 L-4.200,-0.500 Z" fill="#cfcfcf" stroke="none"/><path d="M-4.800,.5 L1.200,4 L0.200,5.300 L-5.500,2 Z" fill="#cfcfcf" stroke="none"/></g>
<path d="M19.5,170.6 l1.800,0 l0,-1.800 Z" fill="#cfcfcf"/>
<path d="M38.5,170.6 l1.800,0 l0,-1.800 Z" fill="#cfcfcf"/>
<g transform="translate(13.3 179.3)" ><path d="M-3,-3 A4.300 4.300 0 1 1 -2.500,3.800" fill="none" stroke="#cfcfcf" stroke-width="1.100" stroke-linejoin="round" stroke-linecap="round" stroke="#9a9a9a"/><path d="M-5.200,-4.800 L-1.800,-4.600 L-4,-1.600 Z" fill="#cfcfcf" stroke="none"/></g>
<g transform="translate(32.3 179.3)" ><rect x="-5" y="-1" width="6" height="6" fill="none" stroke="#cfcfcf" stroke-width="1.100" stroke-linejoin="round" stroke-linecap="round"/><rect x="-2" y="-5" width="7.500" height="7.500" fill="none" stroke="#cfcfcf" stroke-width="1.100" stroke-linejoin="round" stroke-linecap="round"/><path d="M1,-1.500 L4,-4" fill="none" stroke="#cfcfcf" stroke-width="1.100" stroke-linejoin="round" stroke-linecap="round" stroke-width=".8"/></g>
<path d="M19.5,185.9 l1.800,0 l0,-1.800 Z" fill="#cfcfcf"/>
<path d="M38.5,185.9 l1.800,0 l0,-1.800 Z" fill="#cfcfcf"/>
<g transform="translate(13.3 194.6)" ><path d="M-5,4 C-3,3 -3.500,0 -1.500,-.5 C0,-.5 .5,2 2,2.500 C3.500,3 4.500,1 4.500,-.5 M-4,-3.500 L-2.500,-1 M-3,-5 L-1,-3" fill="none" stroke="#cfcfcf" stroke-width="1.100" stroke-linejoin="round" stroke-linecap="round" stroke-width="1.300"/></g>
<g transform="translate(32.3 194.6)" ><rect x="-2" y="-4" width="7" height="8" fill="none" stroke="#cfcfcf" stroke-width="1.100" stroke-linejoin="round" stroke-linecap="round" stroke-dasharray="1.500 1"/><path d="M-5.500,-4.500 L-5.500,3.500 L-3.300,1.600 L0.500,0.500 Z" fill="#cfcfcf" stroke="none"/></g>
<path d="M19.5,201.2 l1.800,0 l0,-1.800 Z" fill="#cfcfcf"/>
<path d="M38.5,201.2 l1.800,0 l0,-1.800 Z" fill="#cfcfcf"/>
<g transform="translate(13.3 209.8)" ><ellipse cx="-1.500" cy="-1" rx="4" ry="3" fill="none" stroke="#cfcfcf" stroke-width="1.100" stroke-linejoin="round" stroke-linecap="round" stroke-width=".9"/><path d="M-5,-1 H1 M-2,-4 V2" fill="none" stroke="#cfcfcf" stroke-width="1.100" stroke-linejoin="round" stroke-linecap="round" stroke-width=".7"/><path d="M1,-.5 L1,6 L2.700,4.500 L5.500,4 Z" fill="#cfcfcf" stroke="none"/></g>
<g transform="translate(32.3 209.8)" ><path d="M-5,-5 V5 H5.500 M-5,-5 C-1,-4 1,0 1.500,5 M-5,0 H0.500 M-2,-3.500 V5" fill="none" stroke="#cfcfcf" stroke-width="1.100" stroke-linejoin="round" stroke-linecap="round" stroke-width=".8"/><path d="M-5,5 L5.500,0 M-5,5 L5.500,2.500" fill="none" stroke="#cfcfcf" stroke-width="1.100" stroke-linejoin="round" stroke-linecap="round" stroke-width=".5" stroke="#999"/></g>
<path d="M19.5,216.4 l1.800,0 l0,-1.800 Z" fill="#cfcfcf"/>
<path d="M38.5,216.4 l1.800,0 l0,-1.800 Z" fill="#cfcfcf"/>
<g transform="translate(13.3 225.1)" ><rect x="-5" y="-5" width="10" height="10" fill="none" stroke="#cfcfcf" stroke-width="1.100" stroke-linejoin="round" stroke-linecap="round" stroke-width=".9"/><path d="M-5,-1.500 C-2,-3 2,0 5,-1.500 M-5,2 C-2,1 2,3.500 5,2 M-1.500,-5 C-3,-2 0,2 -1.500,5 M2,-5 C1,-2 3,2 2,5" fill="none" stroke="#cfcfcf" stroke-width="1.100" stroke-linejoin="round" stroke-linecap="round" stroke-width=".7"/></g>
<g transform="translate(32.3 225.1)" ><rect x="-5" y="-4.500" width="10" height="9" fill="url(#tg)" stroke="#cfcfcf" stroke-width=".9"/></g>
<g transform="translate(13.3 240.4)" ><path d="M-5,5 L3,-3 M-4.500,3 L-3,4.500 M-2.500,1 L-1,2.500 M-.5,-1 L1,.5 M2,-4.500 L4.500,-2" fill="none" stroke="#cfcfcf" stroke-width="1.100" stroke-linejoin="round" stroke-linecap="round" stroke-width="1"/><path d="M3,-5.500 L5.500,-3 L4,-1.500 L1.500,-4 Z" fill="#cfcfcf" stroke="none"/></g>
<g transform="translate(32.3 240.4)" ><path d="M-5.500,5.500 L-4.500,3 L1,-2.500 L2.500,-1 L-3,4.500 Z" fill="none" stroke="#cfcfcf" stroke-width="1.100" stroke-linejoin="round" stroke-linecap="round" stroke-width=".9"/><path d="M1.500,-4.500 L4.500,-1.500 L3.500,-.5 L.5,-3.500 Z" fill="#cfcfcf" stroke="none"/><path d="M3,-6 C4,-6.500 6,-4.500 5.500,-3.500 L4,-2.500 L2,-4.500 Z" fill="#cfcfcf" stroke="none"/></g>
<path d="M38.5,247.0 l1.800,0 l0,-1.800 Z" fill="#cfcfcf"/>
<g transform="translate(13.3 255.7)" ><rect x="-5.500" y="-4.500" width="5" height="5" fill="#cfcfcf" stroke="none"/><circle cx="2.500" cy="2" r="3" fill="none" stroke="#cfcfcf" stroke-width="1.100" stroke-linejoin="round" stroke-linecap="round"/><rect x="-3" y="-2.500" width="4.500" height="4.500" fill="#9a9a9a"/></g>
<g transform="translate(32.3 255.7)" ><rect x="-1.500" y="-2" width="6.500" height="8" rx="1" fill="none" stroke="#cfcfcf" stroke-width="1.100" stroke-linejoin="round" stroke-linecap="round"/><rect x="0" y="-5" width="3.500" height="3" fill="#cfcfcf" stroke="none"/><circle cx="1.700" cy="2" r="1.500" fill="none" stroke="#cfcfcf" stroke-width="1.100" stroke-linejoin="round" stroke-linecap="round" stroke-width=".8"/><path d="M-5.500,-4.500 h1.200 M-5.500,-2.500 h1.200 M-3.500,-3.500 h1.200 M-5.500,-.5 h1.200 M-3.500,-5.500 h1.200" fill="none" stroke="#cfcfcf" stroke-width="1.100" stroke-linejoin="round" stroke-linecap="round" stroke-width=".9"/></g>
<path d="M19.5,262.3 l1.800,0 l0,-1.800 Z" fill="#cfcfcf"/>
<path d="M38.5,262.3 l1.800,0 l0,-1.800 Z" fill="#cfcfcf"/>
<g transform="translate(13.3 271.0)" ><path d="M-5.500,-5.500 V5.500" fill="none" stroke="#cfcfcf" stroke-width="1.100" stroke-linejoin="round" stroke-linecap="round" stroke-width=".8"/><rect x="-4" y="-1" width="2" height="6" fill="#cfcfcf" stroke="none"/><rect x="-1" y="-5" width="2" height="10" fill="#cfcfcf" stroke="none"/><rect x="2" y="-2.500" width="2" height="7.500" fill="#cfcfcf" stroke="none"/><path d="M-5.500,5.500 H5" fill="none" stroke="#cfcfcf" stroke-width="1.100" stroke-linejoin="round" stroke-linecap="round" stroke-width=".8"/></g>
<g transform="translate(32.3 271.0)" ><path d="M-2.500,-6 V3.500 H6 M-5.500,-3 H3 L4.500,-1.500 V5.500" fill="none" stroke="#cfcfcf" stroke-width="1.100" stroke-linejoin="round" stroke-linecap="round" stroke-width="1"/></g>
<path d="M19.5,277.6 l1.800,0 l0,-1.800 Z" fill="#cfcfcf"/>
<path d="M38.5,277.6 l1.800,0 l0,-1.800 Z" fill="#cfcfcf"/>
<g transform="translate(13.3 286.2)" ><path d="M-5,5.500 L-4,1.500 L2.500,-5 L5,-2.500 L-1.500,4 Z" fill="none" stroke="#cfcfcf" stroke-width="1.100" stroke-linejoin="round" stroke-linecap="round" stroke-width="1"/><path d="M-5,5.500 L-2.500,3" fill="none" stroke="#cfcfcf" stroke-width="1.100" stroke-linejoin="round" stroke-linecap="round" stroke-width=".8"/></g>
<g transform="translate(32.3 286.2)" ><path d="M-3.500,0 V-3.500 C-3.500,-4.500 -2.300,-4.500 -2.300,-3.500 V-5 C-2.300,-6 -1,-6 -1,-5 V-5.500 C-1,-6.500 .3,-6.500 .3,-5.500 V-4.800 C.3,-5.800 1.600,-5.800 1.600,-4.800 V0 L3,-2 C3.800,-3 5,-2.200 4.300,-1.200 L2,3.500 C1.500,5 0,5.500 -1,5.500 C-3,5.500 -4,4 -4,2.500 L-5.200,-.8 C-5.500,-1.800 -4.300,-2.300 -3.800,-1.300 Z" fill="#cfcfcf" stroke="none"/></g>
<path d="M19.5,292.8 l1.800,0 l0,-1.800 Z" fill="#cfcfcf"/>
<path d="M38.5,292.8 l1.800,0 l0,-1.800 Z" fill="#cfcfcf"/>
<g transform="translate(13.3 301.5)" ><path d="M-4.500,-5.500 V5.500" fill="none" stroke="#cfcfcf" stroke-width="1.100" stroke-linejoin="round" stroke-linecap="round" stroke-width="1"/><rect x="-3" y="-4" width="5" height="3" fill="#cfcfcf" stroke="none"/><rect x="-3" y=".8" width="8" height="3.200" fill="#cfcfcf" stroke="none"/><path d="M-6,-5.500 h3 M-6,5.500 h3" fill="none" stroke="#cfcfcf" stroke-width="1.100" stroke-linejoin="round" stroke-linecap="round" stroke-width=".8"/></g>
<g transform="translate(32.3 301.5)" ><circle cx="-1" cy="-1.500" r="3.800" fill="none" stroke="#cfcfcf" stroke-width="1.100" stroke-linejoin="round" stroke-linecap="round" stroke-width="1.200"/><path d="M1.800,1.500 L5.500,5.500" fill="none" stroke="#cfcfcf" stroke-width="1.100" stroke-linejoin="round" stroke-linecap="round" stroke-width="1.800"/></g>
<rect x="16" y="325" width="21.300" height="21.800" fill="#fdfdfd"/>
<rect x="22.300" y="331.300" width="9.300" height="9.200" fill="#484848"/>
<path d="M15.600,347.300 L37.300,325.400" stroke="#b21f3d" stroke-width="1.600"/>
<rect x="4.400" y="313.900" width="22.300" height="21.300" fill="#4f4f4f" stroke="#606060" stroke-width=".8"/>
<text x="14.300" y="328.800" font-family="Liberation Sans, sans-serif" font-size="10" font-weight="bold" fill="#ececec" text-anchor="middle">?</text>
<path d="M32,315.500 h3.500 v3.500 M34.200,314.300 l1.300,1.200 M36.700,317.800 l-1.200,1.200" fill="none" stroke="#666" stroke-width=".9"/>
<rect x="6.200" y="341.600" width="4.200" height="4.200" fill="#1a1a1a" stroke="#e8e8e8" stroke-width=".7"/>
<rect x="4.300" y="339.700" width="4.200" height="4.200" fill="#f4f4f4" stroke="#222" stroke-width=".5"/>
<rect x="6" y="354.500" width="7.600" height="7.600" fill="#fdfdfd" stroke="#2e2e2e" stroke-width=".7"/>
<rect x="18.500" y="354.500" width="7.600" height="7.600" fill="url(#tg)" stroke="#2e2e2e" stroke-width=".7"/>
<rect x="31" y="354.500" width="7.600" height="7.600" fill="#fdfdfd" stroke="#2e2e2e" stroke-width=".7"/>
<path d="M31.300,361.800 L38.300,354.800" stroke="#b21f3d" stroke-width="1.500"/>
<rect x="4.400" y="368" width="10.800" height="10.800" fill="#2f2f2f"/>
<circle cx="8.700" cy="372.300" r="2.600" fill="#cfcfcf"/><rect x="9" y="372.800" width="4.200" height="4.200" fill="#8a8a8a" stroke="#e0e0e0" stroke-width=".6"/>
<circle cx="21" cy="372.300" r="2.600" fill="none" stroke="#bdbdbd" stroke-width=".8"/><rect x="21.300" y="372.800" width="4.200" height="4.200" fill="#9a9a9a"/>
<circle cx="33.800" cy="372.300" r="2.400" fill="none" stroke="#5e5e5e" stroke-width=".8"/><rect x="34" y="372.800" width="3.800" height="3.800" fill="#5e5e5e"/>
<rect x="19.500" y="385" width="9.500" height="6.500" fill="#515151" stroke="#c9c9c9" stroke-width=".9"/>
<rect x="15.800" y="388" width="9.500" height="6.500" fill="#6a6a6a" stroke="#c9c9c9" stroke-width=".9"/>
<circle cx="19.500" cy="410.200" r=".9" fill="#cfcfcf"/><circle cx="22.300" cy="410.200" r=".9" fill="#cfcfcf"/><circle cx="25.100" cy="410.200" r=".9" fill="#cfcfcf"/>
</svg>
<!--TOOLS-END-->
<!-- ===== right side ===== -->
<div id="vscroll" class="abs"></div>
<div id="dock" class="abs"></div>
<div id="dockgap" class="abs"></div>
<div id="panel" class="abs"></div>
<div id="ptabs" class="abs">
  <span style="left:5px">Properties</span>
  <span style="left:44px;width:31px;background:#545253;color:#fff;text-align:center">Layers</span>
  <span style="left:81px">History</span>
</div>
<!--PANEL-START-->
<svg class="abs" style="left:1000px;top:55px" width="200" height="620" viewBox="1000 55 200 620" font-family="Liberation Sans, sans-serif">
<path d="M1034.500,61.800 L1033,63.300 L1034.500,64.800 M1037,61.800 L1035.500,63.300 L1037,64.800" fill="none" stroke="#9a9a9a" stroke-width=".7"/>
<path d="M1190.500,61.800 L1192,63.300 L1190.500,64.800 M1193,61.800 L1194.500,63.300 L1193,64.800" fill="none" stroke="#9a9a9a" stroke-width=".7"/>
<rect x="1008" y="370" width="7.500" height="14.500" rx="2.500" fill="#6b6a6a"/>
<path d="M1009.500,84.500 L1011.500,82.500 L1013.500,84.500" fill="none" stroke="#777" stroke-width=".8"/>
<path d="M1009.500,667 L1011.500,669 L1013.500,667" fill="none" stroke="#aaa" stroke-width=".8"/>
<path d="M1025,73.0 H1036" stroke="#3e3e3e" stroke-width="1.400" stroke-dasharray="1 .8"/>
<path d="M1025,114.5 H1036" stroke="#3e3e3e" stroke-width="1.400" stroke-dasharray="1 .8"/>
<path d="M1017,111.0 H1041.5" stroke="#444" stroke-width="1"/>
<path d="M1025,176.1 H1036" stroke="#3e3e3e" stroke-width="1.400" stroke-dasharray="1 .8"/>
<path d="M1017,172.6 H1041.5" stroke="#444" stroke-width="1"/>
<path d="M1025,239.5 H1036" stroke="#3e3e3e" stroke-width="1.400" stroke-dasharray="1 .8"/>
<path d="M1017,236.0 H1041.5" stroke="#444" stroke-width="1"/>
<path d="M1025,284.0 H1036" stroke="#3e3e3e" stroke-width="1.400" stroke-dasharray="1 .8"/>
<path d="M1017,280.5 H1041.5" stroke="#444" stroke-width="1"/>
<path d="M1017,322.500 H1041.500" stroke="#444" stroke-width="1"/>
<g transform="translate(1030.0 82.3) scale(0.90)"><path d="M-5.500,0 C-5.500,-3 -2.500,-5 1,-5 C4,-5 6,-3.500 6,-1.500 C6,.5 4,1 3,1.800 C2,2.800 3.500,4.500 1,4.800 C-2.500,5.200 -5.500,3 -5.500,0 Z" fill="#d8d8d8" stroke="none"/><circle cx="-2.500" cy="-1.500" r="1" fill="#545253"/><circle cx=".5" cy="-2.800" r="1" fill="#545253"/><circle cx="3.500" cy="-1.800" r="1" fill="#545253"/><circle cx="-2.500" cy="1.800" r="1" fill="#545253"/></g>
<g transform="translate(1030.0 99.7) scale(0.90)"><path d="M-5,5 V-5 C0,-4.500 4.500,0 5,5 Z" fill="#d8d8d8" stroke="none"/><path d="M-5,5 V-1 C-2,-0.500 0.500,2 1,5 Z" fill="#8a8a8a"/></g>
<g transform="translate(1030.0 126.3) scale(0.90)"><rect x="-6" y="-4.500" width="12" height="9" fill="none" stroke="#d8d8d8" stroke-width="1.100" stroke-linejoin="round" stroke-linecap="round" stroke-width=".9"/><path d="M-6,0 H6 M-2,-4.500 V4.500 M2,-4.500 V4.500" fill="none" stroke="#d8d8d8" stroke-width="1.100" stroke-linejoin="round" stroke-linecap="round" stroke-width=".8"/><rect x="-5.500" y="-4" width="3.200" height="3.700" fill="#d8d8d8"/><rect x="2.300" y=".4" width="3.200" height="3.700" fill="#d8d8d8"/></g>
<g transform="translate(1030.0 142.8) scale(0.90)"><rect x="-3.500" y="1" width="7" height="5" fill="#d8d8d8" stroke="none"/><path d="M-2,1 V-2 L-3.500,-5 M0,1 V-5.500 M2,1 V-2 L3.500,-5" fill="none" stroke="#d8d8d8" stroke-width="1.100" stroke-linejoin="round" stroke-linecap="round" stroke-width="1.600"/></g>
<g transform="translate(1030.0 161.0) scale(0.90)"><circle cx="0" cy="-3" r="2.700" fill="#d8d8d8" stroke="none"/><circle cx="-3" cy=".8" r="2.700" fill="#d8d8d8" stroke="none"/><circle cx="3" cy=".8" r="2.700" fill="#d8d8d8" stroke="none"/><path d="M0,0 L-1.800,5.500 H1.800 Z" fill="#d8d8d8" stroke="none"/></g>
<g transform="translate(1030.0 187.0) scale(0.90)"><path d="M-6,-3.500 H6" fill="none" stroke="#d8d8d8" stroke-width="1.100" stroke-linejoin="round" stroke-linecap="round" stroke-width="1"/><path d="M-6,0 H6" fill="none" stroke="#d8d8d8" stroke-width="1.100" stroke-linejoin="round" stroke-linecap="round" stroke-width="1.700"/><path d="M-6,4 H6" fill="none" stroke="#d8d8d8" stroke-width="1.100" stroke-linejoin="round" stroke-linecap="round" stroke-width="2.400"/></g>
<g transform="translate(1030.0 205.6) scale(0.90)"><rect x="-5.500" y="-4.500" width="11" height="9" fill="url(#pg)" stroke="#d8d8d8" stroke-width=".9"/></g>
<g transform="translate(1030.0 223.7) scale(0.90)"><circle cx="-1.500" cy="-1" r="4.200" fill="#8e8e8e"/><circle cx="2" cy="1.500" r="4.200" fill="#bdbdbd" fill-opacity=".75"/></g>
<g transform="translate(1030.0 250.0) scale(0.90)"><circle r="3.300" fill="#ececec"/><circle r="5" fill="none" stroke="#cfcfcf" stroke-width="1.600" stroke-dasharray="1.200 1.400"/></g>
<g transform="translate(1030.0 268.0) scale(0.90)"><rect x="-5.500" y="-1.500" width="7" height="7" rx="1" fill="none" stroke="#d8d8d8" stroke-width="1.100" stroke-linejoin="round" stroke-linecap="round"/><path d="M-2,-2 V-5.500 H5.500 V2 H2" fill="none" stroke="#d8d8d8" stroke-width="1.100" stroke-linejoin="round" stroke-linecap="round"/><circle cx="-2" cy="2" r="1.500" fill="none" stroke="#d8d8d8" stroke-width="1.100" stroke-linejoin="round" stroke-linecap="round" stroke-width=".8"/></g>
<g transform="translate(1030.0 293.8) scale(0.90)"><path d="M-.5,-5 H-5.500 V5.500 H5 V.5" fill="none" stroke="#d8d8d8" stroke-width="1.100" stroke-linejoin="round" stroke-linecap="round"/><path d="M0,0 L5.500,-5.500 M1.500,-5.500 H5.500 V-1.500" fill="none" stroke="#d8d8d8" stroke-width="1.100" stroke-linejoin="round" stroke-linecap="round"/></g>
<g transform="translate(1030.0 311.0) scale(0.90)"><rect x="-5.500" y="-5.500" width="7" height="7" fill="none" stroke="#d8d8d8" stroke-width="1.100" stroke-linejoin="round" stroke-linecap="round"/><rect x="-1.500" y="-1.500" width="7" height="7" fill="#545253" stroke="#d8d8d8" stroke-width="1.100"/></g>
<defs><linearGradient id="pg" x1="0" x2="1"><stop offset="0" stop-color="#1c1c1c"/><stop offset="1" stop-color="#f0f0f0"/></linearGradient></defs>
<path d="M1189.500,74.500 H1195 M1189.500,76.500 H1195 M1189.500,78.500 H1195" stroke="#a0a0a0" stroke-width=".8"/>
<rect x="1051.500" y="92.300" width="126" height="12.600" rx="1" fill="#444"/>
<circle cx="1056.500" cy="97.800" r="2.200" fill="none" stroke="#d0d0d0" stroke-width=".9"/><path d="M1058.200,99.500 L1060,101.300" stroke="#d0d0d0" stroke-width="1"/>
<text x="1067.800" y="100.700" font-size="6.400" font-style="italic" fill="#c4c4c4">Search All</text>
<path d="M1184.300,95 H1192.300 L1189.300,98.800 V102.500 L1187.300,101.200 V98.800 Z" fill="#f0f0f0"/>
<rect x="1047" y="112.3" width="149.500" height="12.8" fill="#46617e"/>
<path d="M1060.500,112.3 V299.3 M1072,112.3 V299.3" stroke="#4e4d4d" stroke-width=".5"/>
<rect x="1074.300" y="112.3" width="1.500" height="187.0" fill="#4b7bd0"/>
<path d="M1048.300,118.7 Q1052.400,114.1 1056.500,118.7 Q1052.400,123.3 1048.300,118.7 Z" fill="#b9cbe0"/><circle cx="1052.400" cy="118.7" r="1.500" fill="#46617e"/><circle cx="1052.400" cy="118.7" r=".7" fill="#b9cbe0"/>
<path d="M1081.300,117.5 l2.200,2.200 l2.200,-2.200" fill="none" stroke="#e8e8e8" stroke-width="1"/>
<rect x="1092.3" y="113.0" width="11" height="11" fill="#fdfdfd" stroke="#1e1e1e" stroke-width=".7"/><path d="M1094.3,117.5 c.5,-2 2,-3 3,-2 l0,2 c1,1 1,3 0,4 l-2.500,0 Z" fill="#c91d55"/><path d="M1098.0,120.5 l5,-1.500 l0,3.500 l-5,0 Z" fill="#5c2686"/><rect x="1099.8" y="115.5" width="2" height="2" fill="#c9795c"/>
<text x="1106.700" y="121.1" font-size="6.700" fill="#f4f4f4">Layer 1</text>
<circle cx="1180" cy="118.7" r="2" fill="none" stroke="#c8c8c8" stroke-width=".8"/>
<rect x="1186.700" y="117.1" width="3.200" height="3.200" fill="#1b2a7a" stroke="#8ea6e8" stroke-width=".6"/>
<path d="M1095,129.8 l2.200,2.200 l-2.200,2.200" fill="none" stroke="#e0e0e0" stroke-width="1"/>
<rect x="1106.7" y="126.6" width="11" height="11" fill="#fdfdfd" stroke="#1e1e1e" stroke-width=".7"/><path d="M1108.7,130.6 l2,1 l1.500,-1 l1.500,1.500 l2,-.5 l-1.500,2.500 l-2,-1 l-2,.5 Z" fill="#111"/>
<text x="1120.800" y="134.4" font-size="7" fill="#dedede">bat-2-vi...</text>
<circle cx="1180" cy="132.0" r="2" fill="none" stroke="#c8c8c8" stroke-width=".8"/>
<path d="M1095,143.2 l2.200,2.200 l-2.200,2.200" fill="none" stroke="#e0e0e0" stroke-width="1"/>
<rect x="1106.7" y="139.9" width="11" height="11" fill="#fdfdfd" stroke="#1e1e1e" stroke-width=".7"/><path d="M1108.7,143.9 l2,1 l1.500,-1 l1.500,1.500 l2,-.5 l-1.500,2.500 l-2,-1 l-2,.5 Z" fill="#111"/>
<text x="1120.800" y="147.8" font-size="7" fill="#dedede">bat-1-vi...</text>
<circle cx="1180" cy="145.4" r="2" fill="none" stroke="#c8c8c8" stroke-width=".8"/>
<path d="M1095,156.6 l2.200,2.200 l-2.200,2.200" fill="none" stroke="#e0e0e0" stroke-width="1"/>
<rect x="1106.7" y="153.3" width="11" height="11" fill="#fdfdfd" stroke="#1e1e1e" stroke-width=".7"/><path d="M1108.7,157.3 l2,1 l1.500,-1 l1.500,1.500 l2,-.5 l-1.500,2.500 l-2,-1 l-2,.5 Z" fill="#111"/>
<text x="1120.800" y="161.2" font-size="7" fill="#dedede">bat-0-vi...</text>
<circle cx="1180" cy="158.8" r="2" fill="none" stroke="#c8c8c8" stroke-width=".8"/>
<path d="M1095,169.9 l2.200,2.200 l-2.200,2.200" fill="none" stroke="#e0e0e0" stroke-width="1"/>
<rect x="1106.7" y="166.6" width="11" height="11" fill="#fdfdfd" stroke="#1e1e1e" stroke-width=".7"/><path d="M1107.7,171.6 q2,-1.500 4,0 l.5,-1.200 l.5,1.200 q2,-1.500 4,0 q-2,.5 -2.500,2.500 q-1,-1 -2,0 q-1,-1 -2,0 q-.5,-2 -2.500,-2.500 Z" fill="#111"/>
<text x="1120.800" y="174.5" font-size="7" fill="#dedede">bat-views</text>
<circle cx="1180" cy="172.1" r="2" fill="none" stroke="#c8c8c8" stroke-width=".8"/>
<path d="M1048.300,185.5 Q1052.400,180.9 1056.500,185.5 Q1052.400,190.1 1048.300,185.5 Z" fill="#b9b9b9"/><circle cx="1052.400" cy="185.5" r="1.500" fill="#545253"/><circle cx="1052.400" cy="185.5" r=".7" fill="#b9b9b9"/>
<path d="M1095,183.3 l2.200,2.200 l-2.200,2.200" fill="none" stroke="#e0e0e0" stroke-width="1"/>
<rect x="1106.7" y="180.0" width="11" height="11" fill="#fdfdfd" stroke="#1e1e1e" stroke-width=".7"/><path d="M1109.2,183.5 l2,-1.500 l1,2 l2.500,1 l.5,3.500 l-1,0 l-.5,-2 l-2,0 l-.5,2 l-1,0 l0,-3 Z" fill="#c9795c"/>
<text x="1120.800" y="187.9" font-size="7" fill="#dedede">horse-vi...</text>
<circle cx="1180" cy="185.5" r="2" fill="none" stroke="#c8c8c8" stroke-width=".8"/>
<rect x="1186.700" y="183.9" width="3.200" height="3.200" fill="#1b2a7a" stroke="#8ea6e8" stroke-width=".6"/>
<path d="M1048.300,198.8 Q1052.400,194.2 1056.500,198.8 Q1052.400,203.4 1048.300,198.8 Z" fill="#b9b9b9"/><circle cx="1052.400" cy="198.8" r="1.500" fill="#545253"/><circle cx="1052.400" cy="198.8" r=".7" fill="#b9b9b9"/>
<path d="M1095,196.6 l2.200,2.200 l-2.200,2.200" fill="none" stroke="#e0e0e0" stroke-width="1"/>
<rect x="1106.7" y="193.4" width="11" height="11" fill="#fdfdfd" stroke="#1e1e1e" stroke-width=".7"/><circle cx="1112.2" cy="197.1" r="1.800" fill="#9b3011"/><rect x="1110.7" y="198.9" width="3" height="3" fill="#19151a"/><rect x="1111.2" y="201.9" width="3" height="1.500" fill="#c91d55"/>
<text x="1120.800" y="201.2" font-size="7" fill="#dedede">warrior-...</text>
<circle cx="1180" cy="198.8" r="2" fill="none" stroke="#c8c8c8" stroke-width=".8"/>
<path d="M1095,210.0 l2.200,2.200 l-2.200,2.200" fill="none" stroke="#e0e0e0" stroke-width="1"/>
<rect x="1106.7" y="206.7" width="11" height="11" fill="#fdfdfd" stroke="#1e1e1e" stroke-width=".7"/><path d="M1107.7,211.7 q2,-1.500 4,0 l.5,-1.200 l.5,1.200 q2,-1.500 4,0 q-2,.5 -2.500,2.500 q-1,-1 -2,0 q-1,-1 -2,0 q-.5,-2 -2.500,-2.500 Z" fill="#111"/>
<text x="1120.800" y="214.6" font-size="7" fill="#dedede">bat-svg</text>
<circle cx="1180" cy="212.2" r="2" fill="none" stroke="#c8c8c8" stroke-width=".8"/>
<path d="M1048.300,225.6 Q1052.400,221.0 1056.500,225.6 Q1052.400,230.2 1048.300,225.6 Z" fill="#b9b9b9"/><circle cx="1052.400" cy="225.6" r="1.500" fill="#545253"/><circle cx="1052.400" cy="225.6" r=".7" fill="#b9b9b9"/>
<rect x="1063.500" y="224.8" width="5" height="4" rx=".5" fill="#d6d6d6"/><path d="M1064.700,224.8 v-1.500 a1.300 1.300 0 0 1 2.600 0 v1.500" fill="none" stroke="#d6d6d6" stroke-width=".9"/>
<path d="M1095,223.4 l2.200,2.200 l-2.200,2.200" fill="none" stroke="#e0e0e0" stroke-width="1"/>
<rect x="1106.7" y="220.1" width="11" height="11" fill="#fdfdfd" stroke="#1e1e1e" stroke-width=".7"/><path d="M1107.1,224.6 l3,-1 l3,.5 l1.500,-1.500 l3.500,0 l0,5 l-10,0 Z" fill="#5c2686"/>
<text x="1120.800" y="228.0" font-size="7" fill="#dedede">cliff</text>
<circle cx="1180" cy="225.6" r="2" fill="none" stroke="#c8c8c8" stroke-width=".8"/>
<path d="M1048.300,238.9 Q1052.400,234.3 1056.500,238.9 Q1052.400,243.5 1048.300,238.9 Z" fill="#b9b9b9"/><circle cx="1052.400" cy="238.9" r="1.500" fill="#545253"/><circle cx="1052.400" cy="238.9" r=".7" fill="#b9b9b9"/>
<path d="M1095,236.7 l2.200,2.200 l-2.200,2.200" fill="none" stroke="#e0e0e0" stroke-width="1"/>
<rect x="1106.7" y="233.4" width="11" height="11" fill="#fdfdfd" stroke="#1e1e1e" stroke-width=".7"/><path d="M1110.2,237.9 c1,-3 3,-4 4,-3 l1,2 l-2,.5 c1,2 1.500,4 0,6 l-3,0 c-1,-2 -1,-4 0,-5.500 Z" fill="#c91d55"/>
<text x="1120.800" y="241.3" font-size="7" fill="#dedede">dragon-...</text>
<circle cx="1180" cy="238.9" r="2" fill="none" stroke="#c8c8c8" stroke-width=".8"/>
<rect x="1063.500" y="251.5" width="5" height="4" rx=".5" fill="#d6d6d6"/><path d="M1064.700,251.5 v-1.500 a1.300 1.300 0 0 1 2.600 0 v1.500" fill="none" stroke="#d6d6d6" stroke-width=".9"/>
<path d="M1095,250.1 l2.200,2.200 l-2.200,2.200" fill="none" stroke="#e0e0e0" stroke-width="1"/>
<rect x="1106.7" y="246.8" width="11" height="11" fill="#fdfdfd" stroke="#1e1e1e" stroke-width=".7"/><rect x="1107.1" y="249.3" width="10.200" height="6.500" fill="#6b3a90"/>
<text x="1120.800" y="254.7" font-size="7" fill="#dedede">backgro...</text>
<circle cx="1180" cy="252.3" r="2" fill="none" stroke="#c8c8c8" stroke-width=".8"/>
<path d="M1095,263.4 l2.200,2.200 l-2.200,2.200" fill="none" stroke="#e0e0e0" stroke-width="1"/>
<rect x="1106.7" y="260.2" width="11" height="11" fill="#fdfdfd" stroke="#1e1e1e" stroke-width=".7"/><path d="M1109.2,263.7 l2,-1.500 l1,2 l2.500,1 l.5,3.500 l-1,0 l-.5,-2 l-2,0 l-.5,2 l-1,0 l0,-3 Z" fill="#c9795c"/>
<text x="1120.800" y="268.0" font-size="7" fill="#dedede">horse-svg</text>
<circle cx="1180" cy="265.6" r="2" fill="none" stroke="#c8c8c8" stroke-width=".8"/>
<path d="M1095,276.8 l2.200,2.200 l-2.200,2.200" fill="none" stroke="#e0e0e0" stroke-width="1"/>
<rect x="1106.7" y="273.5" width="11" height="11" fill="#fdfdfd" stroke="#1e1e1e" stroke-width=".7"/><path d="M1110.2,278.0 c1,-3 3,-4 4,-3 l1,2 l-2,.5 c1,2 1.500,4 0,6 l-3,0 c-1,-2 -1,-4 0,-5.500 Z" fill="#c91d55"/>
<text x="1120.800" y="281.4" font-size="7" fill="#dedede">dragon-...</text>
<circle cx="1180" cy="279.0" r="2" fill="none" stroke="#c8c8c8" stroke-width=".8"/>
<path d="M1095,290.2 l2.200,2.200 l-2.200,2.200" fill="none" stroke="#e0e0e0" stroke-width="1"/>
<rect x="1106.7" y="286.9" width="11" height="11" fill="#fdfdfd" stroke="#1e1e1e" stroke-width=".7"/><circle cx="1112.2" cy="290.6" r="1.800" fill="#9b3011"/><rect x="1110.7" y="292.4" width="3" height="3" fill="#19151a"/><rect x="1111.2" y="295.4" width="3" height="1.500" fill="#c91d55"/>
<text x="1120.800" y="294.8" font-size="7" fill="#dedede">warrior-...</text>
<circle cx="1180" cy="292.4" r="2" fill="none" stroke="#c8c8c8" stroke-width=".8"/>
<path d="M1192.500,112.3 h4 v4 Z" fill="#f0f0f0"/>
<g fill="#878787">
<circle cx="1093.800" cy="634.900" r="4.200"/>
<path d="M1081,649.800 L1088.200,644.400 L1093.500,649.800" fill="none" stroke="#878787" stroke-width="7.800" stroke-linecap="round" stroke-linejoin="round"/>
<path d="M1101,641.800 L1106.600,648.200" fill="none" stroke="#878787" stroke-width="7.800" stroke-linecap="round"/>
<text x="1117.800" y="638.800" font-size="10.400" font-weight="bold" stroke="#878787" stroke-width=".55" textLength="63.500" lengthAdjust="spacing" font-family="Liberation Sans, sans-serif">ai-bot.cn</text>
<text x="1116" y="653.300" font-size="13.200" font-weight="900" stroke="#878787" stroke-width=".45" textLength="67" lengthAdjust="spacingAndGlyphs" font-family="Liberation Sans, Noto Sans CJK SC, sans-serif">AI工具集</text>
</g>
</svg>
<!--PANEL-END-->
</body>
</html>
